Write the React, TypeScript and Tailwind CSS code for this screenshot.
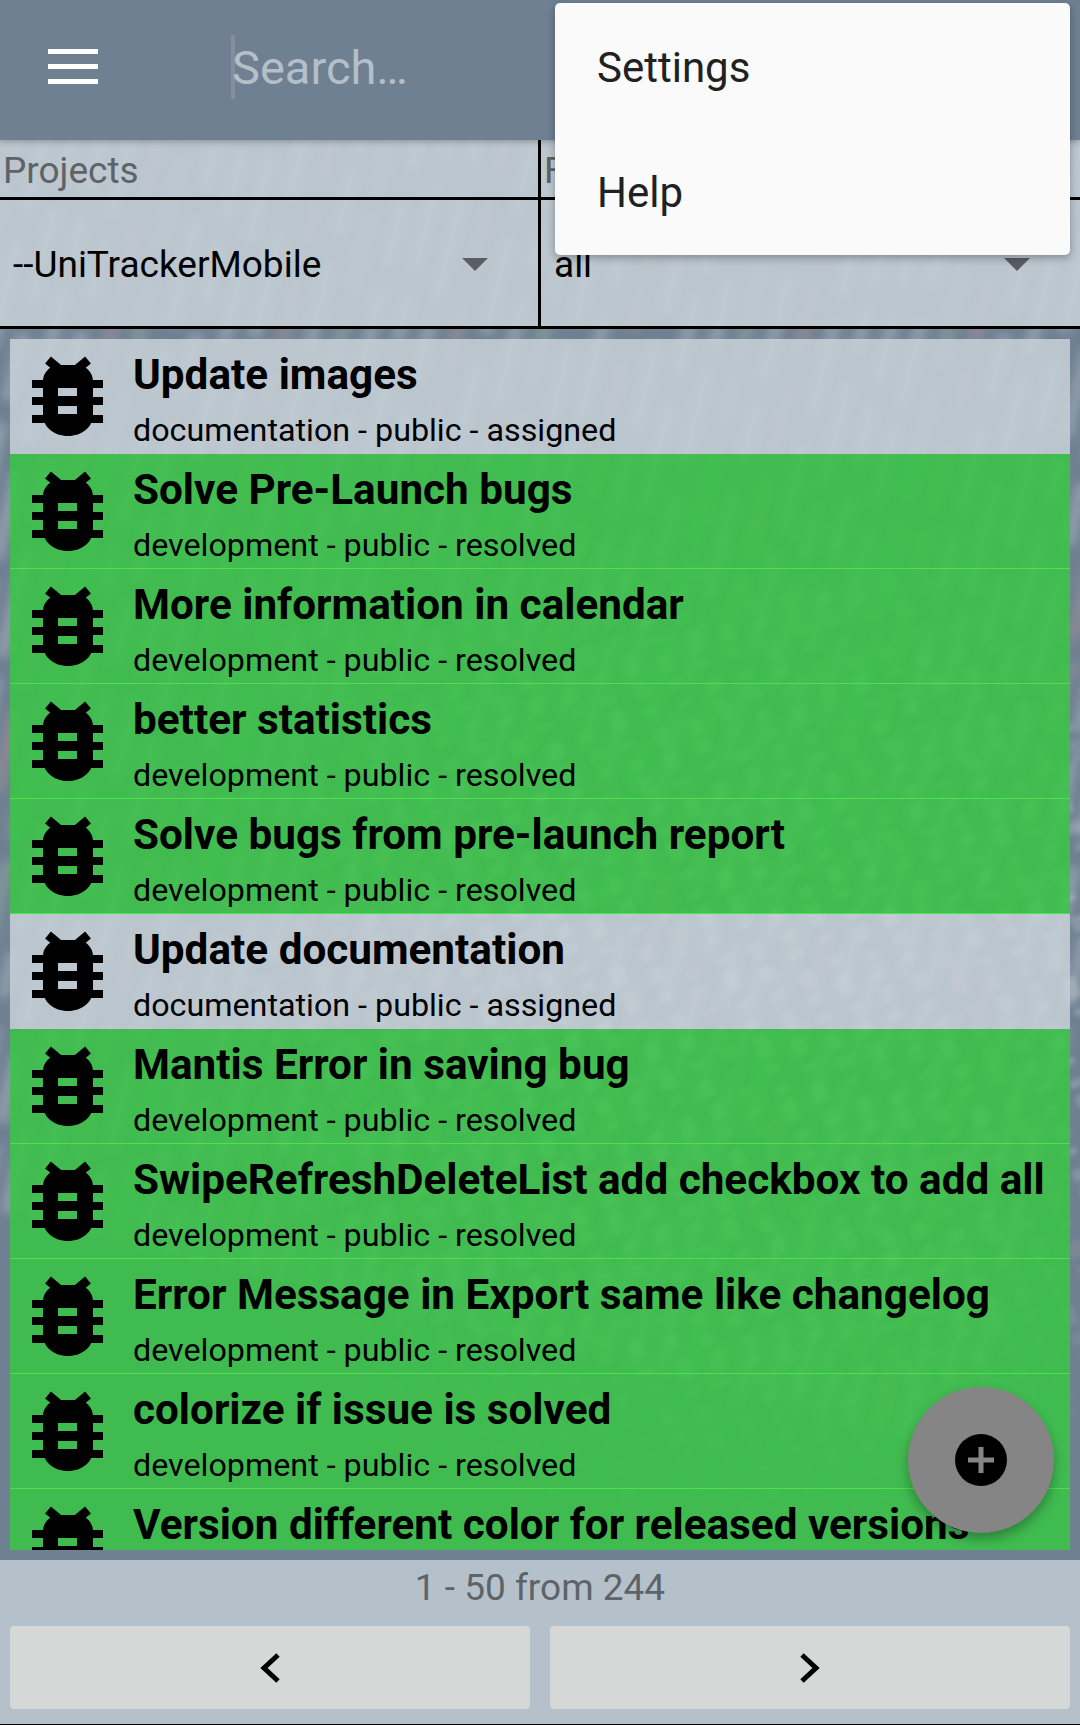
const issues = [
  { title: "Update images", sub: "documentation - public - assigned", open: true },
  { title: "Solve Pre-Launch bugs", sub: "development - public - resolved" },
  { title: "More information in calendar", sub: "development - public - resolved" },
  { title: "better statistics", sub: "development - public - resolved" },
  { title: "Solve bugs from pre-launch report", sub: "development - public - resolved" },
  { title: "Update documentation", sub: "documentation - public - assigned", open: true },
  { title: "Mantis Error in saving bug", sub: "development - public - resolved" },
  { title: "SwipeRefreshDeleteList add checkbox to add all", sub: "development - public - resolved" },
  { title: "Error Message in Export same like changelog", sub: "development - public - resolved" },
  { title: "colorize if issue is solved", sub: "development - public - resolved" },
  { title: "Version different color for released versions", sub: "development - public - resolved" },
]

function BugIcon() {
  return (
    <svg width="72" height="80" viewBox="0 0 72 80" className="shrink-0 overflow-visible">
      <path d="M16 3 L28 13 M56 3 L44 13" stroke="#000" strokeWidth="9" fill="none" />
      <path
        fillRule="evenodd"
        d="M22 8 H50 C55 11 61 16 61 24 V58 C61 70 50 79 36 79 C22 79 11 70 11 58 V24 C11 16 17 11 22 8 Z M26 31 V39 H45 V31 Z M26 49 V57 H45 V49 Z"
        fill="#000"
      />
      <path d="M0 23 H14 V31 H0 Z M0 40 H14 V48 H0 Z M0 58 H14 V66 H0 Z M57 23 H71 V31 H57 Z M57 40 H71 V48 H57 Z M57 58 H71 V66 H57 Z" fill="#000" />
    </svg>
  )
}

// blurred code wallpaper behind the translucent panels
function Wallpaper() {
  const streaks = Array.from({ length: 46 }, (_, i) => i)
  const code = Array.from({ length: 42 }, (_, i) => i)
  return (
    <svg width="1080" height="1725" viewBox="0 0 1080 1725" className="absolute inset-0">
      <defs>
        <filter id="wide">
          <feGaussianBlur stdDeviation="5" />
        </filter>
        <filter id="soft">
          <feGaussianBlur stdDeviation="2" />
        </filter>
        <radialGradient id="focus" cx="720" cy="1000" r="560" gradientUnits="userSpaceOnUse">
          <stop offset="0" stopColor="#fff" />
          <stop offset="0.6" stopColor="#fff" stopOpacity="0.7" />
          <stop offset="1" stopColor="#fff" stopOpacity="0" />
        </radialGradient>
        <mask id="center">
          <rect width="1080" height="1725" fill="url(#focus)" />
        </mask>
      </defs>
      <g filter="url(#wide)" transform="rotate(-76 540 480)">
        {streaks.map((i) => (
          <line
            key={i}
            x1="-300"
            x2="1400"
            y1={i * 28 - 140}
            y2={i * 28 - 140}
            stroke={i % 6 === 0 ? "#f0b0a0" : i % 7 === 0 ? "#b8e8b0" : "#ffffff"}
            strokeOpacity="0.2"
            strokeWidth="15"
            strokeDasharray={`${46 + (i % 4) * 18} 22 ${70 + (i % 3) * 20} 30`}
          />
        ))}
      </g>
      <g filter="url(#soft)" mask="url(#center)">
        <g transform="rotate(66 720 1000)">
          {code.map((i) => (
            <line
              key={i}
              x1="-100"
              x2="1600"
              y1={i * 34 + 300}
              y2={i * 34 + 300}
              stroke={i % 7 === 0 ? "#f0b8a8" : "#ffffff"}
              strokeOpacity="0.3"
              strokeWidth="15"
              strokeDasharray={`${8 + (i % 4) * 4} 8 ${12 + (i % 3) * 5} 11 7 15`}
            />
          ))}
        </g>
      </g>
    </svg>
  )
}

function Picker({ label, value, className }: { label: string; value: string; className: string }) {
  return (
    <div className={className}>
      <div className="h-[60px] border-b-[3px] border-black pl-[3px] pt-[9px] text-[37px] leading-[44px] text-[#5e6368]">{label}</div>
      <div className="flex h-[129px] items-center justify-between border-b-[3px] border-black pl-[13px] pr-[50px]">
        <span className="mt-[3px] text-[37px] text-black">{value}</span>
        <svg width="26" height="13" viewBox="0 0 26 13" className="mt-[2px]">
          <path d="M0 0 H26 L13 13 Z" fill="#5a5e63" />
        </svg>
      </div>
    </div>
  )
}

export default function App() {
  return (
    <div className="relative flex h-[1725px] w-[1080px] flex-col overflow-hidden bg-[#6f8092] font-['Roboto',sans-serif]">
      <Wallpaper />

      <header className="relative z-10 flex h-[140px] items-center bg-[#6f8092] pb-[7px] shadow-[0_2px_6px_rgba(0,0,0,0.25)]">
        <div className="ml-[48px] flex w-[50px] flex-col gap-[10px]">
          <span className="h-[5px] bg-white" />
          <span className="h-[5px] bg-white" />
          <span className="h-[5px] bg-white" />
        </div>
        <div className="ml-[133px] h-[64px] w-[4px] bg-[#858f9c]" />
        <span className="mt-[3px] -ml-[3px] text-[47px] text-[#b4bfc9]">Search…</span>
      </header>

      <div className="relative flex bg-[#c8d1d8]/85">
        <Picker label="Projects" value="--UniTrackerMobile" className="w-[541px] border-r-[3px] border-black" />
        <Picker label="Filter" value="all" className="flex-1" />
      </div>

      <div className="relative mx-[10px] mt-[10px] h-[1211px] overflow-hidden">
        {issues.map((issue) => (
          <div
            key={issue.title}
            className={`flex h-[115px] gap-[29px] pl-[22px] pt-[18px] ${
              issue.open ? "bg-[#c8d1d8]/85" : "border-b border-[#4ee04f] bg-[#38c644]/85"
            }`}
          >
            <BugIcon />
            <div className="-mt-[18px] flex flex-col">
              <span className="mt-[11px] text-[42.25px] leading-[50px] font-bold whitespace-nowrap text-black">{issue.title}</span>
              <span className="mt-[10px] text-[32.25px] leading-[40px] whitespace-nowrap text-black">{issue.sub}</span>
            </div>
          </div>
        ))}
      </div>

      <footer className="relative mt-[10px] flex flex-1 flex-col border-b-[1px] border-black bg-[#c2ccd4]/85">
        <div className="flex h-[56px] items-center justify-center text-[37px] text-[#5e6368]">1 - 50 from 244</div>
        <div className="mt-[10px] flex gap-[20px] px-[10px]">
          <button className="flex h-[83px] flex-1 items-center justify-center rounded-[4px] bg-[#d6d8d8]">
            <svg width="20" height="32" viewBox="0 0 20 32">
              <path d="M18 3 L4 16 L18 29" fill="none" stroke="#000" strokeWidth="5" />
            </svg>
          </button>
          <button className="flex h-[83px] flex-1 items-center justify-center rounded-[4px] bg-[#d6d8d8]">
            <svg width="20" height="32" viewBox="0 0 20 32">
              <path d="M2 3 L16 16 L2 29" fill="none" stroke="#000" strokeWidth="5" />
            </svg>
          </button>
        </div>
      </footer>

      <button className="absolute top-[1387px] left-[908px] flex h-[146px] w-[146px] items-center justify-center rounded-full bg-[#858585] shadow-[0_6px_12px_rgba(0,0,0,0.3)]">
        <svg width="52" height="52" viewBox="0 0 52 52">
          <circle cx="26" cy="26" r="26" fill="#000" />
          <path d="M26 13 V39 M13 26 H39" stroke="#858585" strokeWidth="5" />
        </svg>
      </button>

      <div className="absolute top-[3px] left-[555px] z-20 flex h-[252px] w-[515px] flex-col rounded-[5px] bg-[#fafafa] pl-[42px] text-[42px] text-[#212121] shadow-[0_3px_8px_rgba(0,0,0,0.3)]">
        <span className="mt-[2px] flex h-[126px] items-center">Settings</span>
        <span className="mt-[1px] flex h-[126px] items-center">Help</span>
      </div>
    </div>
  )
}
